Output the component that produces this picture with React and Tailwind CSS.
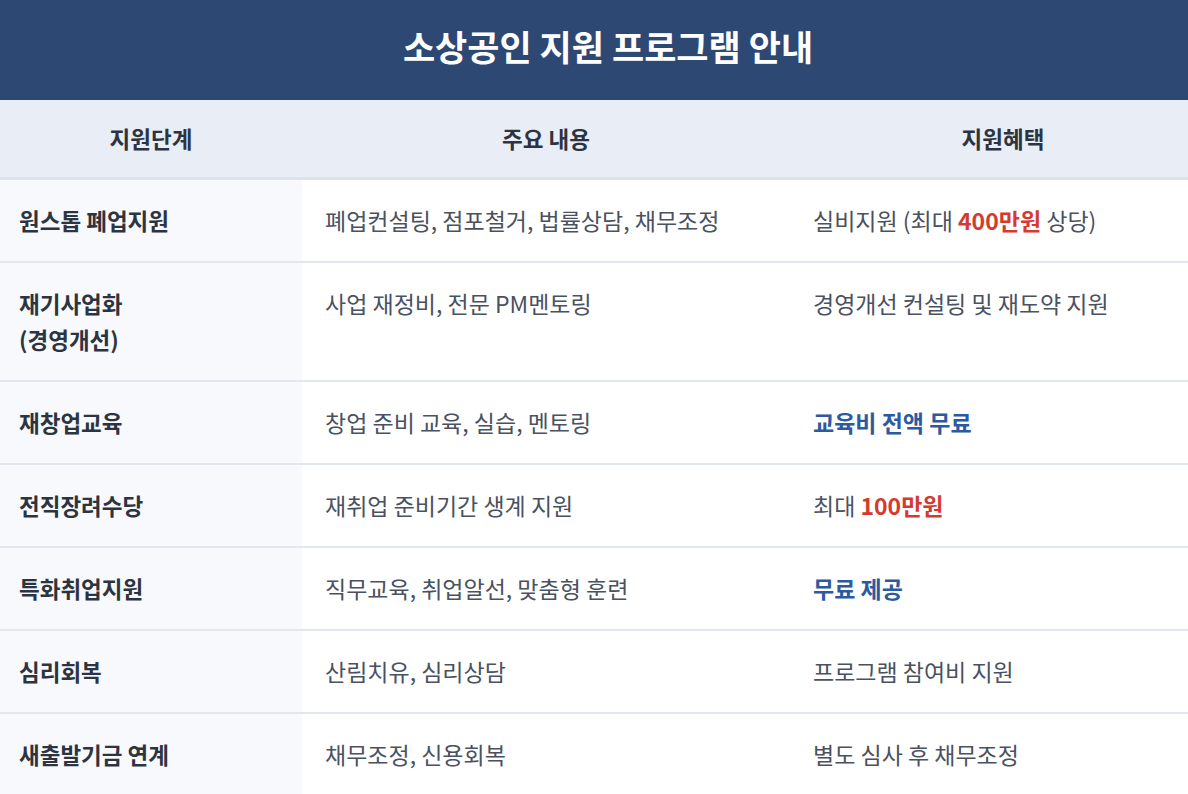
import React from "react";

const rows = [
  {
    stage: ["원스톱 폐업지원"],
    content: "폐업컨설팅, 점포철거, 법률상담, 채무조정",
    benefit: (
      <>
        실비지원 (최대 <span className="font-bold text-[#d63a2f]">400만원</span> 상당)
      </>
    ),
  },
  {
    stage: ["재기사업화", "(경영개선)"],
    content: "사업 재정비, 전문 PM멘토링",
    benefit: "경영개선 컨설팅 및 재도약 지원",
  },
  {
    stage: ["재창업교육"],
    content: "창업 준비 교육, 실습, 멘토링",
    benefit: <span className="font-bold text-[#2c5aa0]">교육비 전액 무료</span>,
  },
  {
    stage: ["전직장려수당"],
    content: "재취업 준비기간 생계 지원",
    benefit: (
      <>
        최대 <span className="font-bold text-[#d63a2f]">100만원</span>
      </>
    ),
  },
  {
    stage: ["특화취업지원"],
    content: "직무교육, 취업알선, 맞춤형 훈련",
    benefit: <span className="font-bold text-[#2c5aa0]">무료 제공</span>,
  },
  {
    stage: ["심리회복"],
    content: "산림치유, 심리상담",
    benefit: "프로그램 참여비 지원",
  },
  {
    stage: ["새출발기금 연계"],
    content: "채무조정, 신용회복",
    benefit: "별도 심사 후 채무조정",
  },
];

export default function App() {
  return (
    <div
      className="w-[1216px] bg-white"
      style={{ fontFamily: '"Noto Sans CJK KR", "Noto Sans", sans-serif' }}
    >
      <div className="h-[100px] bg-[#2e4874] flex items-center justify-center pb-[10px]">
        <h1 className="text-[35px] font-bold text-white leading-none">
          소상공인 지원 프로그램 안내
        </h1>
      </div>
      <div className="grid grid-cols-[302px_488px_426px] bg-[#e9eef6] border-b-[3px] border-[#dde3ed] h-[80px]">
        <div className="flex items-center justify-center text-[22.5px] font-bold text-[#2d3441]">지원단계</div>
        <div className="flex items-center justify-center text-[22.5px] font-bold text-[#2d3441]">주요 내용</div>
        <div className="flex items-center justify-center text-[22.5px] font-bold text-[#2d3441]">지원혜택</div>
      </div>
      {rows.map((r, i) => (
        <div
          key={i}
          className="grid grid-cols-[302px_488px_426px] border-b-2 border-[#e2e7ef] text-[23px] leading-[36px]"
        >
          <div className="bg-[#f7f9fc] pl-[19px] pr-4 pt-[22px] pb-[23px] text-[22.5px] font-bold text-[#2d3441]">
            {r.stage.map((s, j) => (
              <div key={j}>{s}</div>
            ))}
          </div>
          <div className="pl-[23px] pr-4 pt-[22px] pb-[23px] text-[#4a5160]">{r.content}</div>
          <div className="pl-[23px] pr-4 pt-[22px] pb-[23px] text-[#4a5160]">{r.benefit}</div>
        </div>
      ))}
    </div>
  );
}
